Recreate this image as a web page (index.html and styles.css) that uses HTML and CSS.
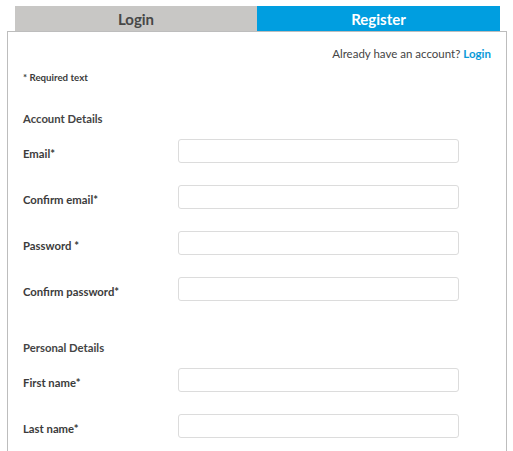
FILE: index.html
```html
<!DOCTYPE html>
<html>
<head>
<meta charset="utf-8">
<link rel="stylesheet" href="styles.css">
</head>
<body>
<div class="tabs">
  <div class="tab tab-login">Login</div>
  <div class="tab tab-register">Register</div>
</div>
<div class="panel">
  <div class="already">Already have an account? <a class="link">Login</a></div>
  <div class="required">* Required text</div>
  <div class="section">Account Details</div>
  <div class="row"><label>Email*</label><input type="text"></div>
  <div class="row"><label>Confirm email*</label><input type="text"></div>
  <div class="row"><label>Password *</label><input type="password"></div>
  <div class="row"><label>Confirm password*</label><input type="password"></div>
  <div class="section section-2">Personal Details</div>
  <div class="row"><label>First name*</label><input type="text"></div>
  <div class="row"><label>Last name*</label><input type="text"></div>
</div>
</body>
</html>
```
FILE: styles.css
```css
html, body {
  margin: 0;
  padding: 0;
  background: #fff;
  font-family: Lato, "Open Sans", sans-serif;
  color: #3b3b3b;
}
.tabs {
  display: flex;
  margin: 6px 0 0 15px;
  width: 485px;
  height: 25px;
}
.tab {
  flex: 0 0 auto;
  display: flex;
  align-items: center;
  justify-content: center;
  font-size: 15px;
  font-weight: 700;
}
.tab-login {
  width: 242px;
  background: #c8c7c5;
  color: #474747;
}
.tab-register {
  width: 243px;
  background: #009ee0;
  color: #fff;
}
.panel {
  margin-left: 7px;
  width: 500px;
  box-sizing: border-box;
  border: 1px solid #bdbdbd;
  border-bottom: none;
  height: 420px;
  padding: 0 15px;
}
.already {
  text-align: right;
  font-size: 11.5px;
  margin-top: 14px;
  line-height: 15px;
  color: #444;
}
.link {
  color: #0a9ad8;
  font-weight: 700;
}
.required {
  font-size: 9.7px;
  font-weight: 700;
  margin-top: 10px;
  line-height: 13px;
}
.section {
  font-size: 11.3px;
  font-weight: 700;
  line-height: 15px;
  margin-top: 27px;
  color: #444;
}
.section-2 {
  margin-top: 39px;
}
.row {
  display: flex;
  align-items: center;
  height: 24px;
  margin-top: 22px;
}
.section + .row {
  margin-top: 13px;
}
.row label {
  width: 155px;
  font-size: 11.3px;
  font-weight: 700;
  padding-top: 5px;
}
.row input {
  width: 281px;
  height: 24px;
  box-sizing: border-box;
  border: 1px solid #dcdcdc;
  border-radius: 3px;
  margin: 0;
  padding: 0 6px;
  outline: none;
}
```
